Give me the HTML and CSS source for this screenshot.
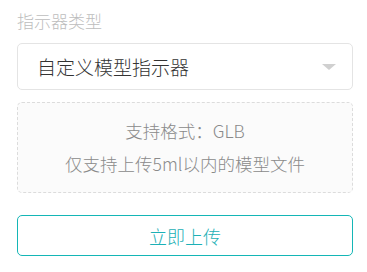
FILE: index.html
```html
<!DOCTYPE html>
<html lang="zh">
<head>
<meta charset="utf-8">
<link rel="stylesheet" href="styles.css">
</head>
<body>
<div class="panel">
  <div class="label">指示器类型</div>
  <div class="select">
    <span class="select-text">自定义模型指示器</span>
    <span class="arrow"></span>
  </div>
  <div class="upload-box">
    <div class="hint">支持格式：GLB</div>
    <div class="hint">仅支持上传5ml以内的模型文件</div>
  </div>
  <button class="upload-btn">立即上传</button>
</div>
</body>
</html>
```
FILE: styles.css
```css
html, body {
  margin: 0;
  padding: 0;
  background: #fff;
}
.panel {
  width: 336px;
  padding: 10px 0 0 17px;
  display: flex;
  flex-direction: column;
  font-family: "Noto Sans CJK SC", "Noto Sans", sans-serif;
  font-weight: 300;
}
.label {
  font-size: 17px;
  line-height: 22px;
  color: #bdbdbd;
  height: 22px;
}
.select {
  margin-top: 11px;
  height: 45px;
  border: 1px solid #e4e4e4;
  border-radius: 5px;
  display: flex;
  align-items: center;
  justify-content: space-between;
  padding: 0 16px 0 19px;
}
.select-text {
  font-size: 19px;
  color: #333;
}
.arrow {
  width: 0;
  height: 0;
  border-left: 7px solid transparent;
  border-right: 7px solid transparent;
  border-top: 6px solid #d0d0d0;
}
.upload-box {
  margin-top: 12px;
  height: 89px;
  border: 1px dashed #dcdcdc;
  border-radius: 5px;
  background: #fbfbfb;
  display: flex;
  flex-direction: column;
  align-items: center;
  justify-content: center;
  gap: 9px;
}
.hint {
  font-size: 17.5px;
  line-height: 24px;
  color: #8a8a8a;
}
.upload-btn {
  margin-top: 22px;
  height: 41px;
  border: 1px solid #14b6b6;
  border-radius: 5px;
  background: #fff;
  color: #1cb0b6;
  font-family: inherit;
  font-weight: 300;
  font-size: 18px;
  padding: 0;
}
```
